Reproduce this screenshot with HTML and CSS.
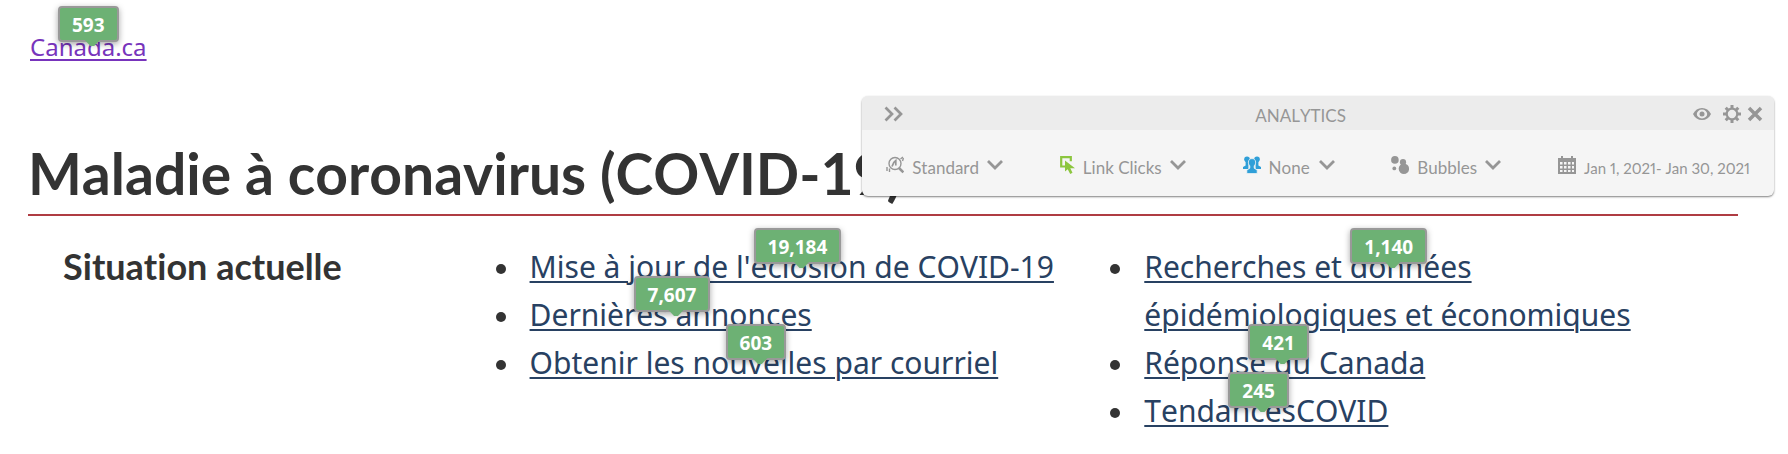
FILE: index.html
```html
<!DOCTYPE html>
<html lang="fr">
<head>
<meta charset="utf-8">
<meta name="viewport" content="width=device-width, initial-scale=1">
<title>Maladie à coronavirus (COVID-19)</title>
<link rel="stylesheet" href="styles.css">
</head>
<body>
<div class="page">
  <nav class="breadcrumb" aria-label="Fil d'Ariane">
    <span class="tracked">
      <a class="visited" href="#">Canada.ca</a>
      <span class="bubble bubble-home">593</span>
    </span>
  </nav>

  <main>
    <h1>Maladie à coronavirus (COVID-19)</h1>
    <section class="situation">
      <h2>Situation actuelle</h2>
      <ul>
        <li><span class="tracked"><a href="#">Mise à jour de l'éclosion de COVID-19</a><span class="bubble bubble-update">19,184</span></span></li>
        <li><span class="tracked"><a href="#">Dernières annonces</a><span class="bubble bubble-news">7,607</span></span></li>
        <li><span class="tracked"><a href="#">Obtenir les nouvelles par courriel</a><span class="bubble bubble-mail">603</span></span></li>
      </ul>
      <ul>
        <li><span class="tracked"><a href="#">Recherches et données épidémiologiques et économiques</a><span class="bubble bubble-research">1,140</span></span></li>
        <li><span class="tracked"><a href="#">Réponse du Canada</a><span class="bubble bubble-response">421</span></span></li>
        <li><span class="tracked"><a href="#">TendancesCOVID</a><span class="bubble bubble-trends">245</span></span></li>
      </ul>
    </section>
  </main>
</div>

<aside class="panel" lang="en" aria-label="Analytics">
  <header class="panel-header">
    <button type="button" aria-label="Collapse">
      <svg width="20" height="16" viewBox="0 0 20 16" fill="none" stroke="currentColor" stroke-width="2.700"><path d="M1.500 1.500 8 8l-6.500 6.500M10.500 1.500 17 8l-6.500 6.500"/></svg>
    </button>
    <span class="panel-title">ANALYTICS</span>
    <div class="panel-actions">
      <button type="button" aria-label="Preview">
        <svg width="18" height="14" viewBox="0 0 18 14"><path fill="currentColor" fill-rule="evenodd" d="M0 7C2 3 5 1 9 1s7 2 9 6c-2 4-5 6-9 6S2 11 0 7zm3.800 0a5.200 4.400 0 1 0 10.400 0a5.200 4.400 0 1 0-10.400 0z"/><circle cx="9" cy="7" r="2.500" fill="currentColor"/></svg>
      </button>
      <button type="button" class="settings" aria-label="Settings">
        <svg width="18" height="18" viewBox="-9 -9 18 18"><g stroke="currentColor" stroke-width="3"><path d="M0-9v3.500M0 9V5.500M-9 0h3.500M9 0H5.500M-6.300-6.300l2.400 2.400M6.300 6.300 3.900 3.900M6.300-6.300 3.900-3.900M-6.300 6.300l2.400-2.400"/></g><circle r="5.300" fill="none" stroke="currentColor" stroke-width="2.200"/></svg>
      </button>
      <button type="button" aria-label="Close">
        <svg width="16" height="16" viewBox="0 0 16 16" stroke="currentColor" stroke-width="3.500"><path d="m2 2 12 12M14 2 2 14"/></svg>
      </button>
    </div>
  </header>
  <div class="panel-body">
    <label class="field">
      <svg width="18" height="18" viewBox="0 0 18 18" fill="none" stroke="currentColor"><circle cx="9" cy="7.500" r="6" stroke-width="1.400"/><path stroke-width="2.600" d="m13 12 4.400 4.400"/><path stroke-width="1.700" d="M6 10.500C6.500 8 7.500 6 9.800 4.500v5"/><path stroke-width="1.400" d="M1 11v4M3.500 12.500v3.500M14.500 3 17 1M16.500 5l1-3"/></svg>
      <select aria-label="Report"><option>Standard</option></select>
      <svg class="chevron" width="16" height="10" viewBox="0 0 16 10" fill="none" stroke="currentColor" stroke-width="2.800"><path d="m1 1 7 7 7-7"/></svg>
    </label>
    <label class="field">
      <svg class="green" width="15" height="18" viewBox="0 0 15 18"><path fill="none" stroke="currentColor" stroke-width="2.200" d="M5 10.500H1.200V1.200h9.600v4"/><path fill="currentColor" d="M5 4.500v11l2.700-2.300 2.500 4.800 2.300-1.200-2.200-4.500H15z"/></svg>
      <select aria-label="Metric"><option>Link Clicks</option></select>
      <svg class="chevron" width="16" height="10" viewBox="0 0 16 10" fill="none" stroke="currentColor" stroke-width="2.800"><path d="m1 1 7 7 7-7"/></svg>
    </label>
    <label class="field">
      <svg class="blue" width="18" height="18" viewBox="0 0 18 18" fill="currentColor"><circle cx="4" cy="3.200" r="2.800"/><circle cx="14" cy="3.200" r="2.800"/><path d="M2.600 4h2.800v9H0v-2l2.600-1.500zM15.400 4h-2.800v9H18v-2l-2.600-1.500z"/><path stroke="#f5f5f5" stroke-width=".8" d="M9 2.600c2.200 0 3.600 1.400 3.600 3.700 0 1.700-.7 2.800-1.400 3.500v2.400l3 1.800v3.600H3.800V14l3-1.800V9.800c-.7-.7-1.400-1.800-1.400-3.500C5.400 4 6.800 2.600 9 2.600z"/></svg>
      <select aria-label="Segment"><option>None</option></select>
      <svg class="chevron" width="16" height="10" viewBox="0 0 16 10" fill="none" stroke="currentColor" stroke-width="2.800"><path d="m1 1 7 7 7-7"/></svg>
    </label>
    <label class="field">
      <svg width="18" height="18" viewBox="0 0 18 18" fill="currentColor"><circle cx="3.900" cy="3.900" r="3.800"/><circle cx="3.300" cy="12.400" r="1.900"/><circle cx="12" cy="6.200" r="3.100"/><circle cx="12.900" cy="12.700" r="5.200"/></svg>
      <select aria-label="Overlay"><option>Bubbles</option></select>
      <svg class="chevron" width="16" height="10" viewBox="0 0 16 10" fill="none" stroke="currentColor" stroke-width="2.800"><path d="m1 1 7 7 7-7"/></svg>
    </label>
    <button type="button" class="field">
      <svg width="18" height="18" viewBox="0 0 18 18"><path fill="currentColor" d="M0 2h3V0h2v2h8V0h2v2h3v16H0z"/><path fill="#f5f5f5" d="M2 6h2.500v2.500H2zM6 6h2.500v2.500H6zM10 6h2.500v2.500H10zM14 6h2v2.500h-2zM2 10h2.500v2.500H2zM6 10h2.500v2.500H6zM10 10h2.500v2.500H10zM14 10h2v2.500h-2zM2 14h2.500v2H2zM6 14h2.500v2H6zM10 14h2.500v2H10zM14 14h2v2h-2z"/></svg>
      <span class="dates">Jan 1, 2021- Jan 30, 2021</span>
    </button>
  </div>
</aside>
</body>
</html>
```
FILE: styles.css
```css
* {
  box-sizing: border-box;
}

body {
  margin: 0;
  background: #fff;
  color: #333;
  font-family: "Noto Sans", sans-serif;
  font-size: 30px;
  font-kerning: none;
  line-height: 48px;
}

.page {
  padding: 27px 50px 20px 28px;
}

.breadcrumb {
  padding-left: 2px;
  font-size: 24px;
  line-height: 40px;
}

a {
  color: #284162;
  text-decoration: underline;
  text-decoration-thickness: 2px;
  text-underline-offset: 3px;
}

a.visited {
  color: #7834bc;
}

h1,
h2 {
  margin: 0;
  font-family: Lato, sans-serif;
  font-variant-ligatures: none;
  font-weight: 700;
}

h1 {
  margin-top: 71px;
  padding-bottom: 6px;
  border-bottom: 2px solid #af3c43;
  font-size: 57px;
  line-height: 70px;
}

h2 {
  font-size: 36px;
  line-height: 46px;
}

.situation {
  display: grid;
  grid-template-columns: 9fr 13fr 13fr;
  padding: 27px 20px 0 35px;
}

ul {
  margin: 0;
  padding-left: 7px;
  list-style: none;
}

li {
  display: flex;
}

li::before {
  content: "";
  flex: none;
  width: 10px;
  height: 10px;
  margin: 21px 24px 0 0;
  border-radius: 50%;
  background: #333;
}

/* Click counts shown over the links */

.tracked {
  display: inline-block;
  position: relative;
  vertical-align: top;
}

.bubble {
  position: absolute;
  top: -15px;
  z-index: 1;
  height: 36px;
  padding: 0 12px;
  border: 2px solid #999;
  border-radius: 4px;
  background: #6db174;
  box-shadow: 0 2px 6px rgba(0, 0, 0, 0.35);
  color: #fff;
  font-family: "Noto Sans", sans-serif;
  font-size: 19px;
  font-weight: 700;
  line-height: 34px;
}

.bubble::after {
  content: "";
  position: absolute;
  top: 30px;
  left: 50%;
  width: 16px;
  height: 8px;
  margin-left: -4px;
  background: #6db174;
  clip-path: polygon(0 0, 100% 0, 100% 20%, 62% 100%, 38% 100%, 0 20%);
}

.bubble-home {
  top: -21px;
  left: 28px;
}

.bubble-update {
  left: 224px;
}

.bubble-news {
  left: 104px;
}

.bubble-mail {
  left: 196px;
}

.bubble-research {
  left: 206px;
}

.bubble-response {
  left: 104px;
}

.bubble-trends {
  left: 84px;
}

/* Floating analytics panel */

.panel {
  position: absolute;
  top: 96px;
  right: 14px;
  z-index: 2;
  width: 51%;
  border-radius: 6px;
  background: #f5f5f5;
  box-shadow: 0 1px 2px rgba(0, 0, 0, 0.5);
  color: #969696;
  font-family: Lato, sans-serif;
  font-size: 17px;
  font-variant-numeric: proportional-nums;
  line-height: 24px;
}

.panel svg {
  display: block;
  flex: none;
}

.panel button,
.panel select {
  margin: 0;
  padding: 0;
  border: 0;
  background: none;
  color: inherit;
  font: inherit;
  font-variant-numeric: inherit;
}

.panel-header {
  display: grid;
  grid-template-columns: 1fr auto 1fr;
  align-items: center;
  height: 34px;
  padding: 2px 11px 0 22px;
  border-radius: 6px 6px 0 0;
  background: #ececec;
}

.panel-title {
  padding: 4px 46px 0 0;
}

.panel-actions {
  display: flex;
  align-items: center;
  justify-content: flex-end;
}

.panel .settings {
  margin: 0 6px 0 12px;
}

.panel-body {
  display: flex;
  align-items: center;
  justify-content: space-between;
  padding: 22px 24px 18px;
}

.panel .field {
  display: flex;
  align-items: center;
  gap: 8px;
}

.panel .field select {
  appearance: none;
  padding: 6px 24px 0 0;
  line-height: 20px;
}

.panel .dates {
  padding-top: 6px;
  font-size: 15px;
  line-height: 20px;
}

.chevron {
  margin-left: -24px;
  pointer-events: none;
}

.green {
  color: #8cc63f;
}

.blue {
  color: #2f9fd8;
}
```
